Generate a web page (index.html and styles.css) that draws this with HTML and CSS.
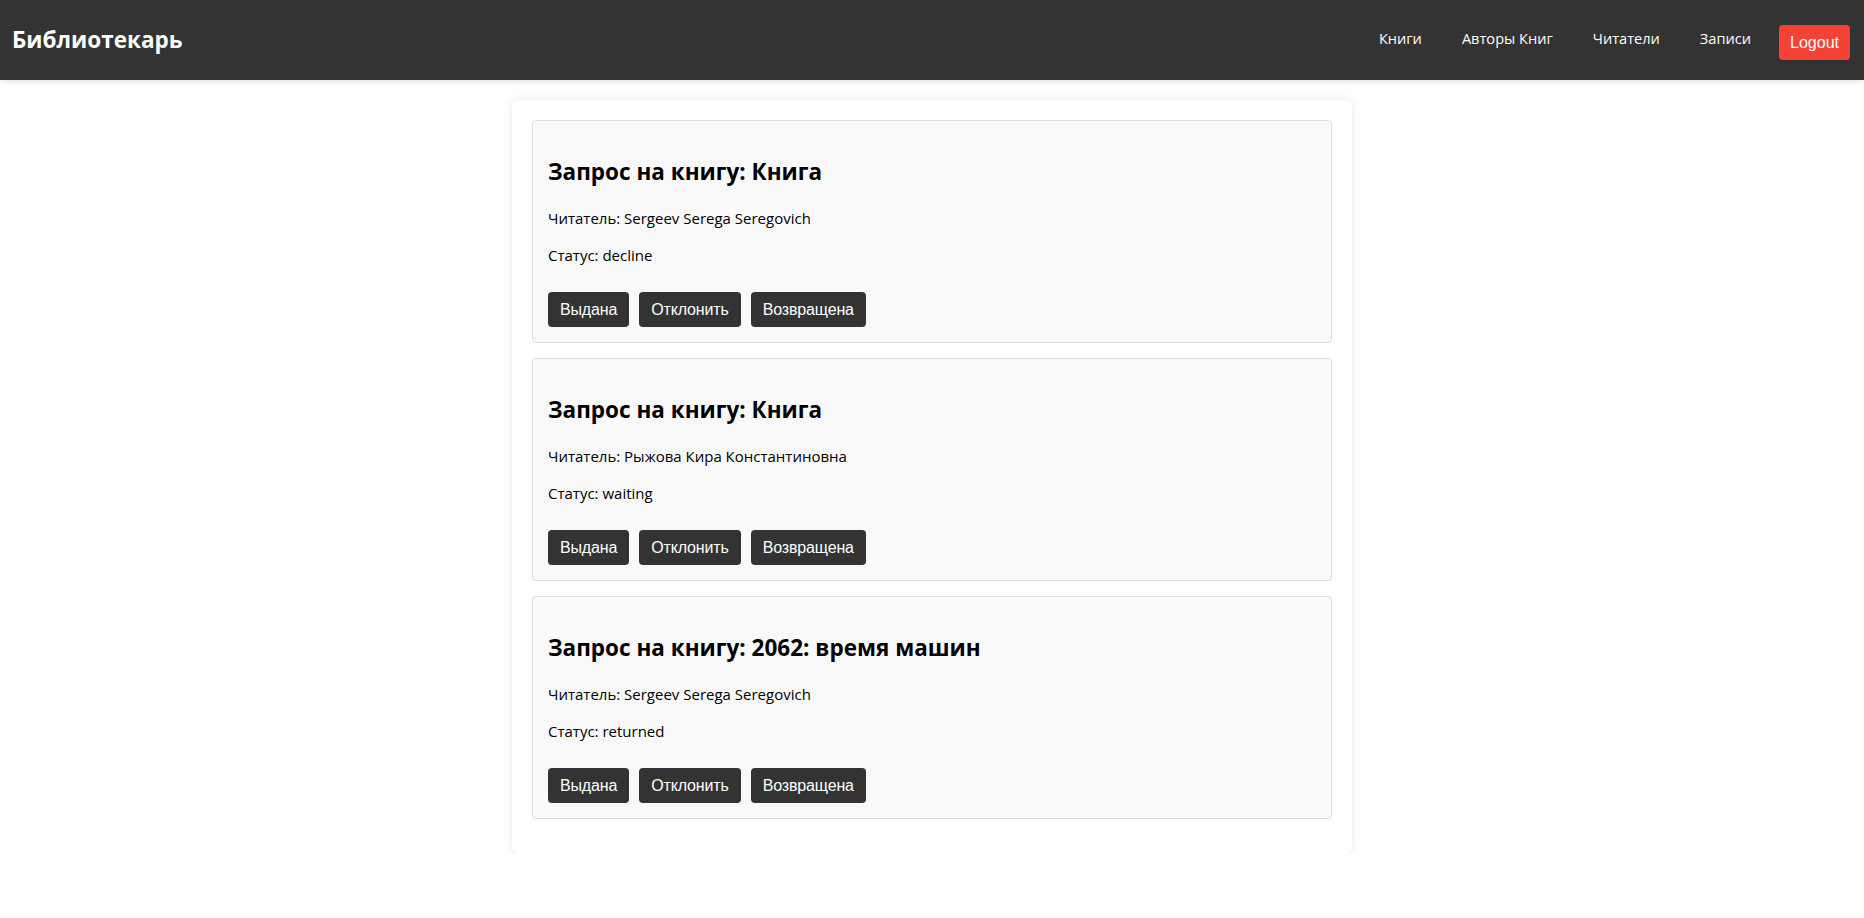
FILE: index.html
```html
<!DOCTYPE html>
<html lang="ru">
<head>
<meta charset="utf-8">
<title>Библиотекарь</title>
<link rel="stylesheet" href="styles.css">
</head>
<body>
<header class="topbar">
  <div class="brand">Библиотекарь</div>
  <nav class="nav">
    <a class="nav-link" href="#">Книги</a>
    <a class="nav-link" href="#">Авторы Книг</a>
    <a class="nav-link" href="#">Читатели</a>
    <a class="nav-link" href="#">Записи</a>
    <button class="logout">Logout</button>
  </nav>
</header>
<main class="container">
  <div class="request-card">
    <h2 class="request-title">Запрос на книгу: Книга</h2>
    <p class="request-line">Читатель: Sergeev Serega Seregovich</p>
    <p class="request-line">Статус: decline</p>
    <div class="actions">
      <button class="btn">Выдана</button>
      <button class="btn">Отклонить</button>
      <button class="btn">Возвращена</button>
    </div>
  </div>
  <div class="request-card">
    <h2 class="request-title">Запрос на книгу: Книга</h2>
    <p class="request-line">Читатель: Рыжова Кира Константиновна</p>
    <p class="request-line">Статус: waiting</p>
    <div class="actions">
      <button class="btn">Выдана</button>
      <button class="btn">Отклонить</button>
      <button class="btn">Возвращена</button>
    </div>
  </div>
  <div class="request-card">
    <h2 class="request-title">Запрос на книгу: 2062: время машин</h2>
    <p class="request-line">Читатель: Sergeev Serega Seregovich</p>
    <p class="request-line">Статус: returned</p>
    <div class="actions">
      <button class="btn">Выдана</button>
      <button class="btn">Отклонить</button>
      <button class="btn">Возвращена</button>
    </div>
  </div>
</main>
</body>
</html>
```

FILE: styles.css
```css
* { box-sizing: border-box; }

html, body {
  margin: 0;
  padding: 0;
  background: #ffffff;
}

body {
  font-family: "Open Sans", "Noto Sans", sans-serif;
  color: #000;
}

.topbar {
  height: 80px;
  background: #333333;
  display: flex;
  align-items: center;
  justify-content: space-between;
  padding: 0 14px 0 12px;
  box-shadow: 0 2px 5px rgba(0, 0, 0, 0.1);
}

.brand {
  color: #fff;
  font-weight: 700;
  font-size: 22.5px;
  line-height: 30px;
}

.nav {
  display: flex;
  align-items: center;
}

.nav-link {
  color: #fff;
  text-decoration: none;
  font-size: 14.6px;
  line-height: 20px;
  padding: 0 20px;
  margin-top: -4px;
}

.logout {
  margin-left: 8px;
  margin-top: 5px;
  background: #f44336;
  color: #fff;
  border: none;
  border-radius: 4px;
  font-family: "Liberation Sans", Arial, sans-serif;
  font-size: 16px;
  line-height: 19px;
  padding: 8px 11px;
}

.container {
  width: 840px;
  margin: 20px auto 0;
  background: #fff;
  padding: 20px;
  border-radius: 8px;
  box-shadow: 0 0 10px rgba(0, 0, 0, 0.1);
}

.request-card {
  background: #f9f9f9;
  border: 1px solid #dddddd;
  border-radius: 4px;
  padding: 15px;
  margin-bottom: 15px;
}

.request-title {
  margin: 20px 0;
  font-size: 22.5px;
  line-height: 32px;
  font-weight: 700;
}

.request-line {
  margin: 16px 0;
  font-size: 15px;
  line-height: 21px;
}

.actions {
  display: flex;
  gap: 10px;
  padding-top: 10px;
}

.btn {
  background: #333333;
  color: #fff;
  border: none;
  border-radius: 4px;
  font-family: "Liberation Sans", Arial, sans-serif;
  font-size: 16px;
  letter-spacing: -0.15px;
  line-height: 19px;
  padding: 8px 12px;
}
```
